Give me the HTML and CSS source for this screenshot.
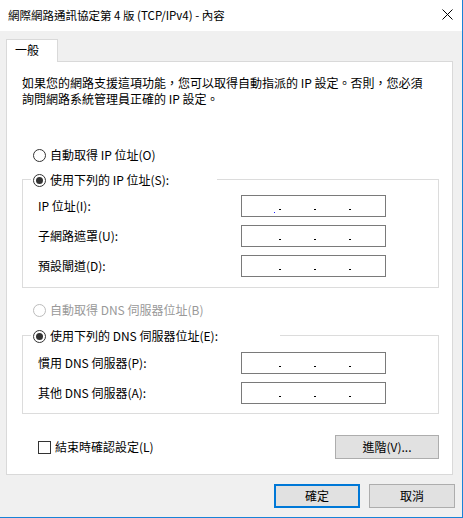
FILE: index.html
```html
<!DOCTYPE html>
<html lang="zh-Hant">
<head>
<meta charset="utf-8">
<title>網際網路通訊協定第 4 版 (TCP/IPv4) - 內容</title>
<link rel="stylesheet" href="styles.css">
</head>
<body>
<div class="window">
  <div class="titlebar">
    <span class="title">網際網路通訊協定第 4 版 (TCP/IPv4) - 內容</span>
    <svg class="close" width="11" height="11" viewBox="0 0 11 11"><path d="M0.5 0.5 L10.5 10.5 M10.5 0.5 L0.5 10.5" stroke="#000" stroke-width="1" fill="none"/></svg>
  </div>
  <div class="body">
    <div class="tabs"><div class="tab">一般</div></div>
    <div class="panel">
      <p class="desc">如果您的網路支援這項功能，您可以取得自動指派的 IP 設定。否則，您必須<br>詢問網路系統管理員正確的 IP 設定。</p>

      <div class="radio-row first"><span class="radio"></span><span>自動取得 IP 位址(O)</span></div>

      <div class="group">
        <div class="legend legend-ip"><span class="radio checked"></span><span>使用下列的 IP 位址(S):</span></div>
        <div class="field"><span class="label">IP 位址(I):</span><span class="ipbox"><span class="caret"></span><span class="dot"></span><span class="dot"></span><span class="dot"></span></span></div>
        <div class="field"><span class="label">子網路遮罩(U):</span><span class="ipbox"><span class="dot"></span><span class="dot"></span><span class="dot"></span></span></div>
        <div class="field"><span class="label">預設閘道(D):</span><span class="ipbox"><span class="dot"></span><span class="dot"></span><span class="dot"></span></span></div>
      </div>

      <div class="radio-row disabled"><span class="radio"></span><span>自動取得 DNS 伺服器位址(B)</span></div>

      <div class="group group-dns">
        <div class="legend legend-dns"><span class="radio checked"></span><span>使用下列的 DNS 伺服器位址(E):</span></div>
        <div class="field"><span class="label">慣用 DNS 伺服器(P):</span><span class="ipbox"><span class="dot"></span><span class="dot"></span><span class="dot"></span></span></div>
        <div class="field"><span class="label">其他 DNS 伺服器(A):</span><span class="ipbox"><span class="dot"></span><span class="dot"></span><span class="dot"></span></span></div>
      </div>

      <div class="bottom-row">
        <div class="check-row"><span class="checkbox"></span><span>結束時確認設定(L)</span></div>
        <button class="btn adv">進階(V)...</button>
      </div>
    </div>
    <div class="footer">
      <button class="btn default">確定</button>
      <button class="btn">取消</button>
    </div>
  </div>
</div>
</body>
</html>
```

FILE: styles.css
```css
* { box-sizing: border-box; }
html, body { margin: 0; padding: 0; }
body {
  width: 463px;
  height: 518px;
  font-family: "Noto Sans CJK TC", "Noto Sans", sans-serif;
  font-size: 12px;
  color: #000;
  background: #f0f0f0;
  overflow: hidden;
}
.window {
  width: 463px;
  height: 518px;
  background: #f0f0f0;
  border-right: 1px solid #1883d7;
  border-bottom: 1px solid #1883d7;
  display: flex;
  flex-direction: column;
}
.titlebar {
  height: 31px;
  background: #fff;
  display: flex;
  justify-content: space-between;
  align-items: flex-start;
  padding-left: 8px;
  flex: none;
}
.title { font-size: 11.5px; line-height: 16px; margin-top: 7px; }
.close { margin-top: 9px; margin-right: 9px; }
.body {
  padding: 8px 7px 0 6px;
  display: flex;
  flex-direction: column;
}
.tabs { height: 22px; display: flex; }
.tab {
  position: relative;
  z-index: 1;
  width: 52px;
  height: 23px;
  background: #fff;
  border: 1px solid #d9d9d9;
  border-bottom: none;
  padding-left: 8px;
  line-height: 20px;
}
.panel {
  width: 447px;
  height: 414px;
  background: #fff;
  border: 1px solid #d9d9d9;
  padding: 13px 13px 0 15px;
}
.desc { margin: 0; line-height: 16px; }
.radio-row, .legend, .check-row {
  display: flex;
  align-items: center;
  height: 16px;
  line-height: 16px;
}
.radio-row { padding-left: 11px; }
.radio-row.first { margin-top: 40px; }
.radio {
  width: 13px;
  height: 13px;
  border: 1px solid #333;
  border-radius: 50%;
  background: #fff;
  margin-right: 4px;
  flex: none;
  display: flex;
  align-items: center;
  justify-content: center;
}
.radio.checked::after {
  content: "";
  width: 7px;
  height: 7px;
  border-radius: 50%;
  background: #333;
}
.disabled { color: #999; margin-top: 14px; }
.disabled .radio { border-color: #bcbcbc; }
.group {
  border: 1px solid #dcdcdc;
  margin-top: 16px;
  padding: 0 0 10px 15px;
}
.group-dns { margin-top: 17px; padding-bottom: 9px; }
.legend {
  background: #fff;
  margin: -8px 0 7px -7px;
  padding-left: 2px;
}
.legend-ip { width: 186px; }
.legend-dns { width: 249px; margin-bottom: 8px; }
.field {
  display: flex;
  align-items: center;
  height: 22px;
  margin-bottom: 8px;
}
.field:last-child { margin-bottom: 0; }
.label { width: 203px; line-height: 16px; }
.ipbox {
  position: relative;
  width: 145px;
  height: 22px;
  border: 1px solid #7a7a7a;
  background: #fff;
  display: flex;
  align-items: flex-end;
  padding: 0 0 6px 37px;
  gap: 33px;
}
.dot { width: 2px; height: 1px; background: #000; }
.caret {
  position: absolute;
  left: 32px;
  top: 16px;
  width: 1px;
  height: 1px;
  background: #2020ff;
}
.bottom-row {
  display: flex;
  justify-content: space-between;
  align-items: center;
  margin-top: 21px;
}
.check-row { padding-left: 16px; }
.checkbox {
  width: 13px;
  height: 13px;
  border: 1px solid #333;
  background: #fff;
  margin-right: 4px;
  flex: none;
}
.btn {
  font-family: inherit;
  font-size: 12px;
  color: #000;
  background: #e1e1e1;
  border: 1px solid #adadad;
  width: 86px;
  height: 24px;
  padding: 0;
  line-height: 16px;
  border-radius: 0;
}
.btn.adv { width: 104px; }
.btn.default { border: 2px solid #0078d7; }
.footer {
  display: flex;
  justify-content: flex-end;
  gap: 9px;
  margin-top: 9px;
}
```
